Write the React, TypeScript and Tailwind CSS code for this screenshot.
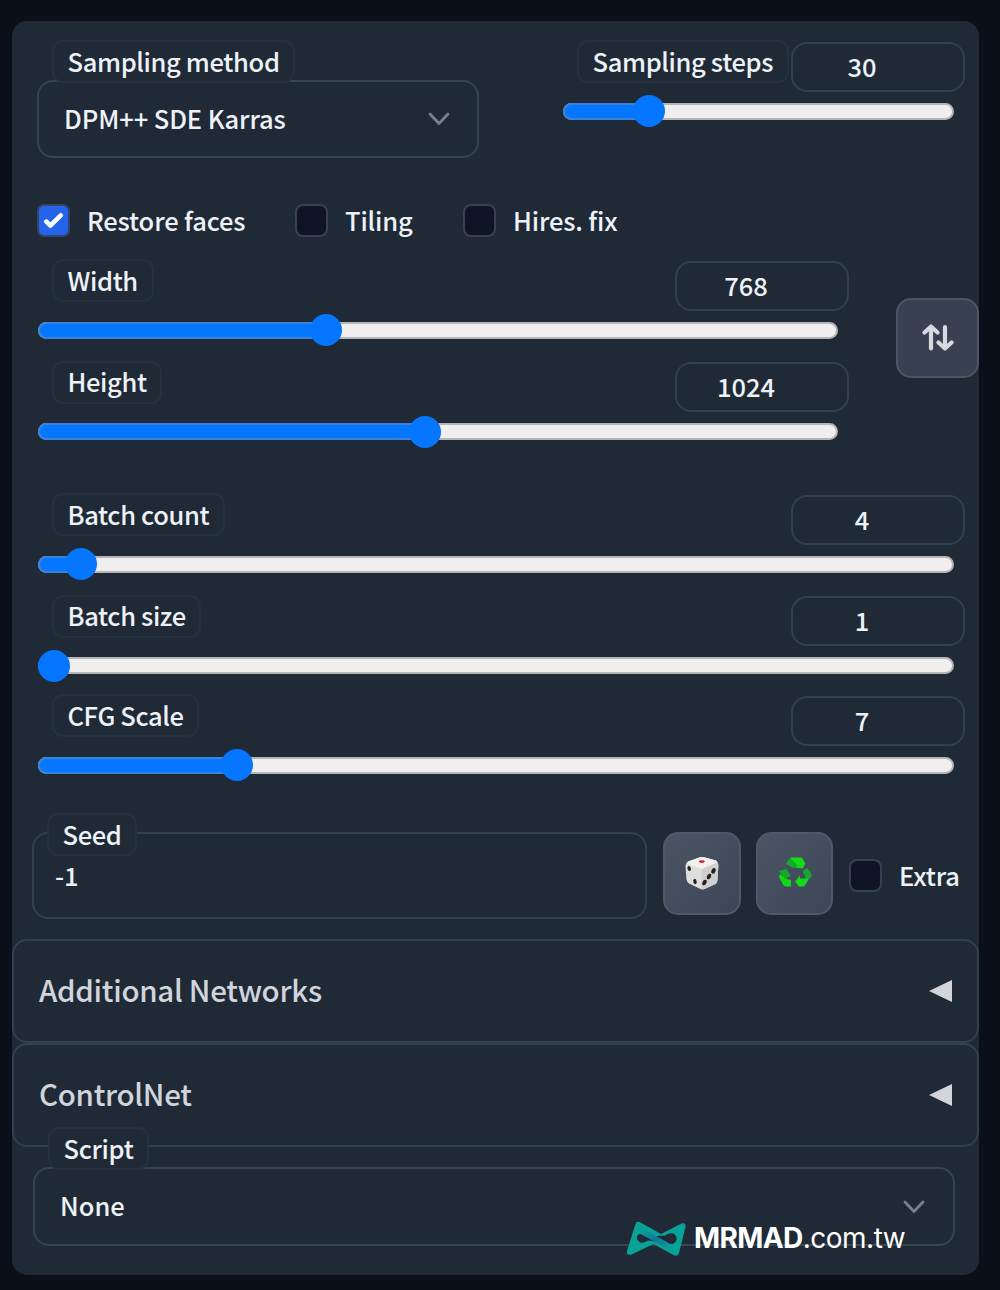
import React from "react";

const font = "font-['Noto_Sans_CJK_SC',sans-serif]";

function Chip({ text, w }: { text: string; w: string }) {
  return (
    <div className={`relative z-10 flex h-[43px] items-center rounded-[11px] border-2 border-[#25313e] bg-[#1f2a36] pl-[13.500px] ${w}`}>
      <span className="-mt-[2px] whitespace-nowrap tracking-[-0.36px]">{text}</span>
    </div>
  );
}

function Slider({ label, w, value, fill }: { label: string; w: string; value: string; fill: number }) {
  return (
    <div className="flex h-[87px] flex-col justify-between">
      <div className="-mr-[11px] flex items-start justify-between pl-[14px]">
        <Chip text={label} w={w} />
        <div className="mt-[1.500px] flex h-[50px] w-[174px] items-center justify-center rounded-[16px] border-2 border-[#33404e] pr-[32px]">
          <span className="-mt-[2px]">{value}</span>
        </div>
      </div>
      <div className="relative flex h-8 items-center">
        <div className="h-[17px] w-full overflow-hidden rounded-full border-2 border-[#b5b5b8] bg-[#f0eeef]" />
        <div className="absolute left-0 h-[17px] rounded-l-full border-2 border-r-0 border-[#3a82da] bg-[#0576ff]" style={{ width: fill }} />
        <div className="absolute size-8 rounded-full bg-[#0576ff]" style={{ left: fill - 16 }} />
      </div>
    </div>
  );
}

function Box({ checked = false }: { checked?: boolean }) {
  return checked ? (
    <div className="flex size-[33px] items-center justify-center rounded-[7px] border-2 border-[#33456a] bg-[#2563eb]">
      <svg viewBox="0 0 16 16" className="size-[33px] shrink-0" fill="white" stroke="white" strokeWidth="0.3">
        <path d="M12.207 4.793a1 1 0 010 1.414l-5 5a1 1 0 01-1.414 0l-2-2a1 1 0 011.414-1.414L6.500 9.086l4.293-4.293a1 1 0 011.414 0z" />
      </svg>
    </div>
  ) : (
    <div className="size-[33px] rounded-[8px] border-2 border-[#374151] bg-[#0f1424]" />
  );
}

function Check({ label, checked, w }: { label: string; checked?: boolean; w: string }) {
  return (
    <div className={`flex items-center gap-[17px] ${w}`}>
      <Box checked={checked} />
      <span className="-mt-[2px] whitespace-nowrap tracking-[-0.15px]">{label}</span>
    </div>
  );
}

function Chevron() {
  return (
    <svg viewBox="0 0 22 14" className="h-[14px] w-[22px]" fill="none" stroke="#77808c" strokeWidth="2.8" strokeLinecap="round" strokeLinejoin="round">
      <path d="M2 2l9 9.500L20 2" />
    </svg>
  );
}

function Accordion({ title }: { title: string }) {
  return (
    <div className="flex h-[104px] items-center justify-between rounded-[15px] border-2 border-[#33404e] pr-[25px] pl-[25px] text-[29.500px] text-[#d1d5db]">
      <span className="-mt-[3px] tracking-[-0.3px]">{title}</span>
      <svg viewBox="0 0 23 22" className="-mt-px h-[22px] w-[23px]" fill="#d1d5db"><path d="M0 11L23 0v22z" /></svg>
    </div>
  );
}

function Dice() {
  return (
    <svg viewBox="0 0 34 34" className="-mt-[2px] size-[34px]">
      <path d="M3 5.500L15 1.200Q17 .6 19 1.200L31 4.500Q33.500 6 33.400 9L32.500 24Q32.300 27 30 28.200L20 32.700Q17.500 34 15 32.700L4 27.500Q1.700 26 1.400 23L.5 10Q.5 7 3 5.500z" fill="#dededd" />
      <path d="M3 5.500L15 1.200Q17 .6 19 1.200L31 4.500Q32.500 6 31 7L19 12.500Q17 13 15 12.500L3 8Q1.500 7 3 5.500z" fill="#f1f1f0" />
      <path d="M17 13l14.500-6Q33.500 7 33.400 9L32.500 24Q32.300 27 30 28.200L20 32.700Q17.500 34 16 33z" fill="#cfcfce" />
      <ellipse cx="16.800" cy="5.600" rx="3" ry="1.400" fill="#d8202c" />
      <g fill="#222">
        <ellipse cx="4.200" cy="12.500" rx="1.700" ry="2.600" transform="rotate(-15 4.200 12.500)" />
        <ellipse cx="10" cy="25.500" rx="1.700" ry="2.700" transform="rotate(-15 10 25.500)" />
        <ellipse cx="28.500" cy="14.800" rx="2" ry="2.900" transform="rotate(25 28.500 14.800)" />
        <ellipse cx="24" cy="20.500" rx="2" ry="2.900" transform="rotate(25 24 20.500)" />
        <ellipse cx="19.500" cy="26.500" rx="2" ry="2.900" transform="rotate(25 19.500 26.500)" />
      </g>
    </svg>
  );
}

function Recycle() {
  return (
    <svg viewBox="0 0 34 30" className="-mt-[3px] h-[30px] w-[34px]">
      <path d="M8 7Q11 .5 14 .5L18 2 20 9 15 11z" fill="#16a82a" />
      <path d="M12 .5h10q3 0 4 4l1.500 2-3 5-8-1 3-2z" fill="#12dc1a" />
      <path d="M.5 14l8-2 4.500 7-3 1-2 3z" fill="#16a82a" />
      <path d="M2 17l6 5 5 1v6.500H9q-3 0-4-2L1 20z" fill="#12d81a" />
      <path d="M24.500 14l5-3 4 6q.5 2-1 4l-4 2z" fill="#16a82a" />
      <path d="M22 18.500v3h9l-3.500 6q-1 2-3 2h-3.500l-4-5z" fill="#12dc1a" />
    </svg>
  );
}

function Logo() {
  return (
    <svg viewBox="0 0 60 36" className="h-[36px] w-[60px]">
      <defs>
        <linearGradient id="strand" gradientUnits="userSpaceOnUse" x1="14" y1="10" x2="46" y2="27">
          <stop offset="0" stopColor="#08a396" />
          <stop offset="0.5" stopColor="#14759a" />
          <stop offset="1" stopColor="#08a396" />
        </linearGradient>
      </defs>
      <path
        fillRule="evenodd"
        fill="#08a396"
        d="M9.500 3Q11 -.5 14.500 1.500L35 13 55.500 2.500Q60 1 59.500 6L53 32Q52 36 47.500 34L27.500 23 5.500 33.500Q0 35 1 30zM21 12.500Q15 10.500 11.500 14.500Q9.500 19 14 21.500Q17 22.500 22 19.500L29 20.500 29 16zM32 19.500L41 23Q47 24.500 50 20.500Q52 16 48 12.800Q44 11 39 14.500L31 15z"
      />
      <path d="M16 10.500L44 26" stroke="url(#strand)" strokeWidth="5.500" strokeLinecap="round" />
    </svg>
  );
}

const tool = "flex h-[83px] items-center justify-center rounded-[15px] border-2 border-[#505968] bg-gradient-to-br from-[#4b5563] to-[#3d4557]";

export default function App() {
  return (
    <div className={`h-[1290px] w-[1000px] overflow-hidden bg-[#0b0f19] pt-[21px] pl-[12px] text-[25.500px] leading-none font-medium text-[#eef2f8] ${font}`}>
      <main className="relative flex h-[1254px] w-[967px] flex-col rounded-[15px] bg-[#1f2a36]">
        <section className="flex h-[183px] justify-between pt-[19px] pr-[25px] pl-[25px]">
          <div className="w-[442px]">
            <div className="pl-[15px]"><Chip text="Sampling method" w="w-[243px]" /></div>
            <div className="-mt-[3px] flex h-[78px] items-center justify-between rounded-[16px] border-2 border-[#374452] pr-[27px] pl-[25px]">
              <span className="-mt-[2px] tracking-[-0.1px]">DPM++ SDE Karras</span>
              <Chevron />
            </div>
          </div>
          <div className="w-[391px]"><Slider label="Sampling steps" w="w-[212px]" value="30" fill={86} /></div>
        </section>

        <section className="flex h-[55px] items-start pl-[25px]">
          <Check label="Restore faces" checked w="w-[258px]" />
          <Check label="Tiling" w="w-[168px]" />
          <Check label="Hires. fix" w="w-[160px]" />
        </section>

        <section className="flex h-[234px] justify-between pl-[26px]">
          <div className="flex w-[800px] flex-col gap-[14.500px]">
            <Slider label="Width" w="w-[102px]" value="768" fill={288} />
            <Slider label="Height" w="w-[110px]" value="1024" fill={387} />
          </div>
          <button className="mt-[39px] flex h-[80px] w-[83px] items-center justify-center rounded-[15px] border-2 border-[#4b5563] bg-[#384051]">
            <svg viewBox="0 0 32 28" className="h-[28px] w-[32px]" fill="none" stroke="#d5d9e0" strokeWidth="4.2" strokeLinecap="round" strokeLinejoin="round">
              <path d="M9 24.500V3M2.500 8.500L9 2.500l6.500 6M23 3v21.500M16.500 18.500l6.500 6 6.500-6" />
            </svg>
          </button>
        </section>

        <section className="flex h-[320px] flex-col pr-[25px] pl-[26px]">
          <div className="h-[101.500px]"><Slider label="Batch count" w="w-[173px]" value="4" fill={43} /></div>
          <div className="h-[99.500px]"><Slider label="Batch size" w="w-[149px]" value="1" fill={16} /></div>
          <Slider label="CFG Scale" w="w-[147px]" value="7" fill={199} />
        </section>

        <section className="flex h-[126px] pl-[20px]">
          <div className="w-[615px]">
            <div className="pl-[15px]"><Chip text="Seed" w="w-[90px]" /></div>
            <div className="-mt-[24px] flex h-[87px] items-center rounded-[16px] border-2 border-[#33404e] pl-[21px]"><span className="-mt-[2px]">-1</span></div>
          </div>
          <button className={`mt-[19px] ml-[16px] w-[78px] ${tool}`}><Dice /></button>
          <button className={`mt-[19px] ml-[15px] w-[77px] ${tool}`}><Recycle /></button>
          <div className="mt-[46px] ml-[16px] h-[33px]"><Check label="Extra" w="w-[112px]" /></div>
        </section>

        <Accordion title="Additional Networks" />
        <Accordion title="ControlNet" />

        <section className="-mt-[20px] pl-[21px]">
          <div className="pl-[15px]"><Chip text="Script" w="w-[101px]" /></div>
          <div className="-mt-[3px] flex h-[79px] w-[922px] items-center justify-between rounded-[16px] border-2 border-[#374452] pr-[28px] pl-[25px]">
            <span className="-mt-[4px]">None</span>
            <Chevron />
          </div>
        </section>

        <div className="absolute top-[1199px] left-[614px] flex h-[37px] items-center font-['Inter',sans-serif] text-[28px] text-white">
          <Logo />
          <span className="-mt-px ml-[8px] font-bold tracking-[-0.6px]">MRMAD</span>
          <span className="-mt-px font-normal tracking-[-0.5px]">.com.tw</span>
        </div>
      </main>
    </div>
  );
}
